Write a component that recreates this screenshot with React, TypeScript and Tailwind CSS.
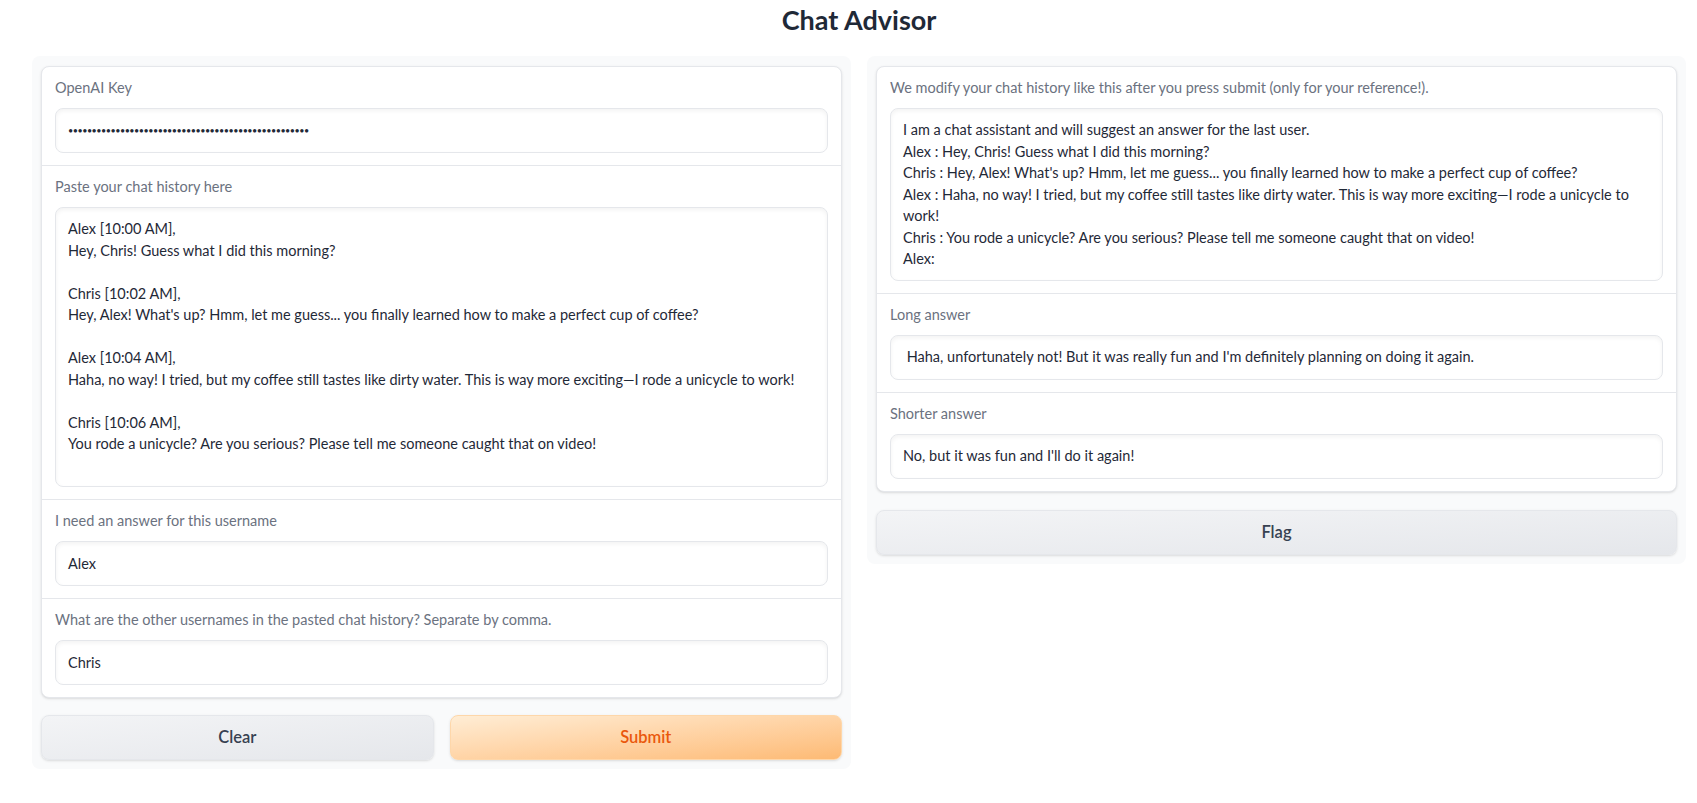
const FONT = 'font-["Lato","Noto_Sans",sans-serif]'

const CHAT_HISTORY = `Alex [10:00 AM],
Hey, Chris! Guess what I did this morning?

Chris [10:02 AM],
Hey, Alex! What's up? Hmm, let me guess... you finally learned how to make a perfect cup of coffee?

Alex [10:04 AM],
Haha, no way! I tried, but my coffee still tastes like dirty water. This is way more exciting—I rode a unicycle to work!

Chris [10:06 AM],
You rode a unicycle? Are you serious? Please tell me someone caught that on video!`

const MODIFIED = `I am a chat assistant and will suggest an answer for the last user.
Alex : Hey, Chris! Guess what I did this morning?
Chris : Hey, Alex! What's up? Hmm, let me guess... you finally learned how to make a perfect cup of coffee?
Alex : Haha, no way! I tried, but my coffee still tastes like dirty water. This is way more exciting—I rode a unicycle to work!
Chris : You rode a unicycle? Are you serious? Please tell me someone caught that on video!
Alex:`

const inputBox =
  'bg-white border border-[#e5e7eb] rounded-lg shadow-[inset_0_2px_4px_rgba(0,0,0,0.05)] text-[14.5px] text-[#1f2937]'

function Block({ label, first, children }: { label: string; first?: boolean; children: React.ReactNode }) {
  return (
    <div className={`px-[13px] pt-[11px] pb-[12px] ${first ? '' : 'border-t border-[#e5e7eb]'}`}>
      <div className="text-[14.5px] leading-5 text-[#6b7280] mb-[10px]">{label}</div>
      {children}
    </div>
  )
}

function Field({ value }: { value: string }) {
  return (
    <div className={`${inputBox} h-[45px] px-3 flex items-center whitespace-pre`}>{value}</div>
  )
}

function Area({ value, fixed }: { value: string; fixed?: boolean }) {
  return (
    <div
      className={`${inputBox} px-3 py-[10px] leading-[21.5px] whitespace-pre-line ${fixed ? 'h-[280px]' : ''}`}
    >
      {value}
    </div>
  )
}

function Btn({ label, primary, className = '' }: { label: string; primary?: boolean; className?: string }) {
  return (
    <button
      className={`h-[45px] rounded-lg border text-[16.5px] font-semibold shadow-sm ${
        primary
          ? 'bg-linear-to-br from-[#ffedd5] to-[#fdba74] border-[#fed7aa] text-[#ea580c]'
          : 'bg-linear-to-br from-[#f3f4f6] to-[#e5e7eb] border-[#e5e7eb] text-[#374151]'
      } ${className}`}
    >
      {label}
    </button>
  )
}

export default function App() {
  return (
    <div className={`${FONT} min-h-screen bg-white pl-[32px] pr-[11px]`}>
      <h1 className="text-center text-[27px] font-bold text-[#1f2937] leading-[40px]">Chat Advisor</h1>

      <div className="flex gap-4 items-start mt-[16px]">
        <div className="flex-1 bg-[#f9fafb] rounded-lg p-[9px] pt-[10px] flex flex-col gap-[17px]">
          <div className="bg-white border border-[#e5e7eb] rounded-lg shadow-sm">
            <Block label="OpenAI Key" first>
              <div className={`${inputBox} h-[45px] px-3 flex items-center`}>
                <span className="text-[9px] tracking-[-0.5px] text-[#1f2937]">{'•'.repeat(51)}</span>
              </div>
            </Block>
            <Block label="Paste your chat history here">
              <Area value={CHAT_HISTORY} fixed />
            </Block>
            <Block label="I need an answer for this username">
              <Field value="Alex" />
            </Block>
            <Block label="What are the other usernames in the pasted chat history? Separate by comma.">
              <Field value="Chris" />
            </Block>
          </div>
          <div className="flex gap-4">
            <Btn label="Clear" className="flex-1" />
            <Btn label="Submit" primary className="flex-1" />
          </div>
        </div>

        <div className="flex-1 bg-[#f9fafb] rounded-lg p-[9px] pt-[10px] flex flex-col gap-[18px]">
          <div className="bg-white border border-[#e5e7eb] rounded-lg shadow-sm">
            <Block label="We modify your chat history like this after you press submit (only for your reference!)." first>
              <Area value={MODIFIED} />
            </Block>
            <Block label="Long answer">
              <Field value=" Haha, unfortunately not! But it was really fun and I'm definitely planning on doing it again." />
            </Block>
            <Block label="Shorter answer">
              <Field value="No, but it was fun and I'll do it again!" />
            </Block>
          </div>
          <Btn label="Flag" />
        </div>
      </div>
    </div>
  )
}
